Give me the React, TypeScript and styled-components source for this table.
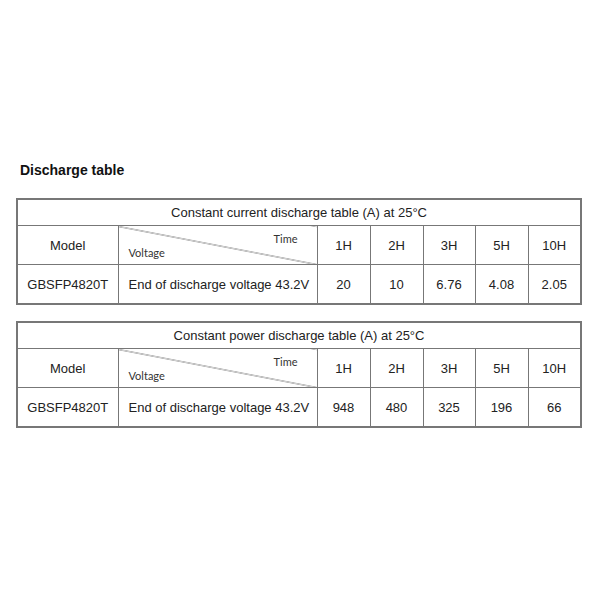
import styled, { createGlobalStyle } from "styled-components";

const GlobalStyle = createGlobalStyle`
    body {
        margin: 0;
        background: #ffffff;
        font-family: "Liberation Sans", Arial, sans-serif;
    }
`

const Page = styled.div`
    width: 600px;
    height: 600px;
    box-sizing: border-box;
    padding: 161px 20px 0 16px;
    display: flex;
    flex-direction: column;
`

const Heading = styled.div`
    font-weight: bold;
    font-size: 14px;
    line-height: 18px;
    color: #111;
    margin: 0 0 19px 4px;
`

const Table = styled.table`
    width: 564px;
    border-collapse: collapse;
    table-layout: fixed;
    border: 2px solid #777;
    margin-bottom: 16px;
    color: #222;
    font-size: 13px;
`

const Cell = styled.td`
    border: 1px solid #777;
    text-align: center;
    padding: 0;
    height: 38px;
`

const CaptionCell = styled(Cell)`
    height: 25px;
`

const LeftCell = styled(Cell)`
    text-align: left;
    padding-left: 10px;
`

const DiagCell = styled(Cell)`
    background: linear-gradient(to top right, transparent calc(50% - 0.7px), #666 50%, transparent calc(50% + 0.7px));
`

const DiagInner = styled.div`
    display: flex;
    flex-direction: column;
    height: 38px;
    box-sizing: border-box;
    padding: 6px 19px 5px 10px;
    font-family: Lato, "Open Sans", sans-serif;
    font-size: 11px;
    color: #333;
`

const TimeLabel = styled.span`align-self: flex-end;`
const VoltLabel = styled.span`align-self: flex-start; margin-top: auto;`

const widths = [101, 199, 53, 53, 52, 53, 53];
const hours = ["1H", "2H", "3H", "5H", "10H"];

const DischargeTable = (props: { title: string; values: string[] }) => (
    <Table>
        <colgroup>
            {widths.map((w, i) => <col key={i} style={{ width: w }} />)}
        </colgroup>
        <tbody>
            <tr>
                <CaptionCell colSpan={7}>{props.title}</CaptionCell>
            </tr>
            <tr>
                <Cell>Model</Cell>
                <DiagCell>
                    <DiagInner>
                        <TimeLabel>Time</TimeLabel>
                        <VoltLabel>Voltage</VoltLabel>
                    </DiagInner>
                </DiagCell>
                {hours.map(h => <Cell key={h}>{h}</Cell>)}
            </tr>
            <tr>
                <Cell>GBSFP4820T</Cell>
                <LeftCell>End of discharge voltage 43.2V</LeftCell>
                {props.values.map((v, i) => <Cell key={i}>{v}</Cell>)}
            </tr>
        </tbody>
    </Table>
);

const App = () => (
    <>
        <GlobalStyle />
        <Page>
            <Heading>Discharge table</Heading>
            <DischargeTable
                title="Constant current discharge table (A) at 25°C"
                values={["20", "10", "6.76", "4.08", "2.05"]}
            />
            <DischargeTable
                title="Constant power discharge table (A) at 25°C"
                values={["948", "480", "325", "196", "66"]}
            />
        </Page>
    </>
);

export default App;
